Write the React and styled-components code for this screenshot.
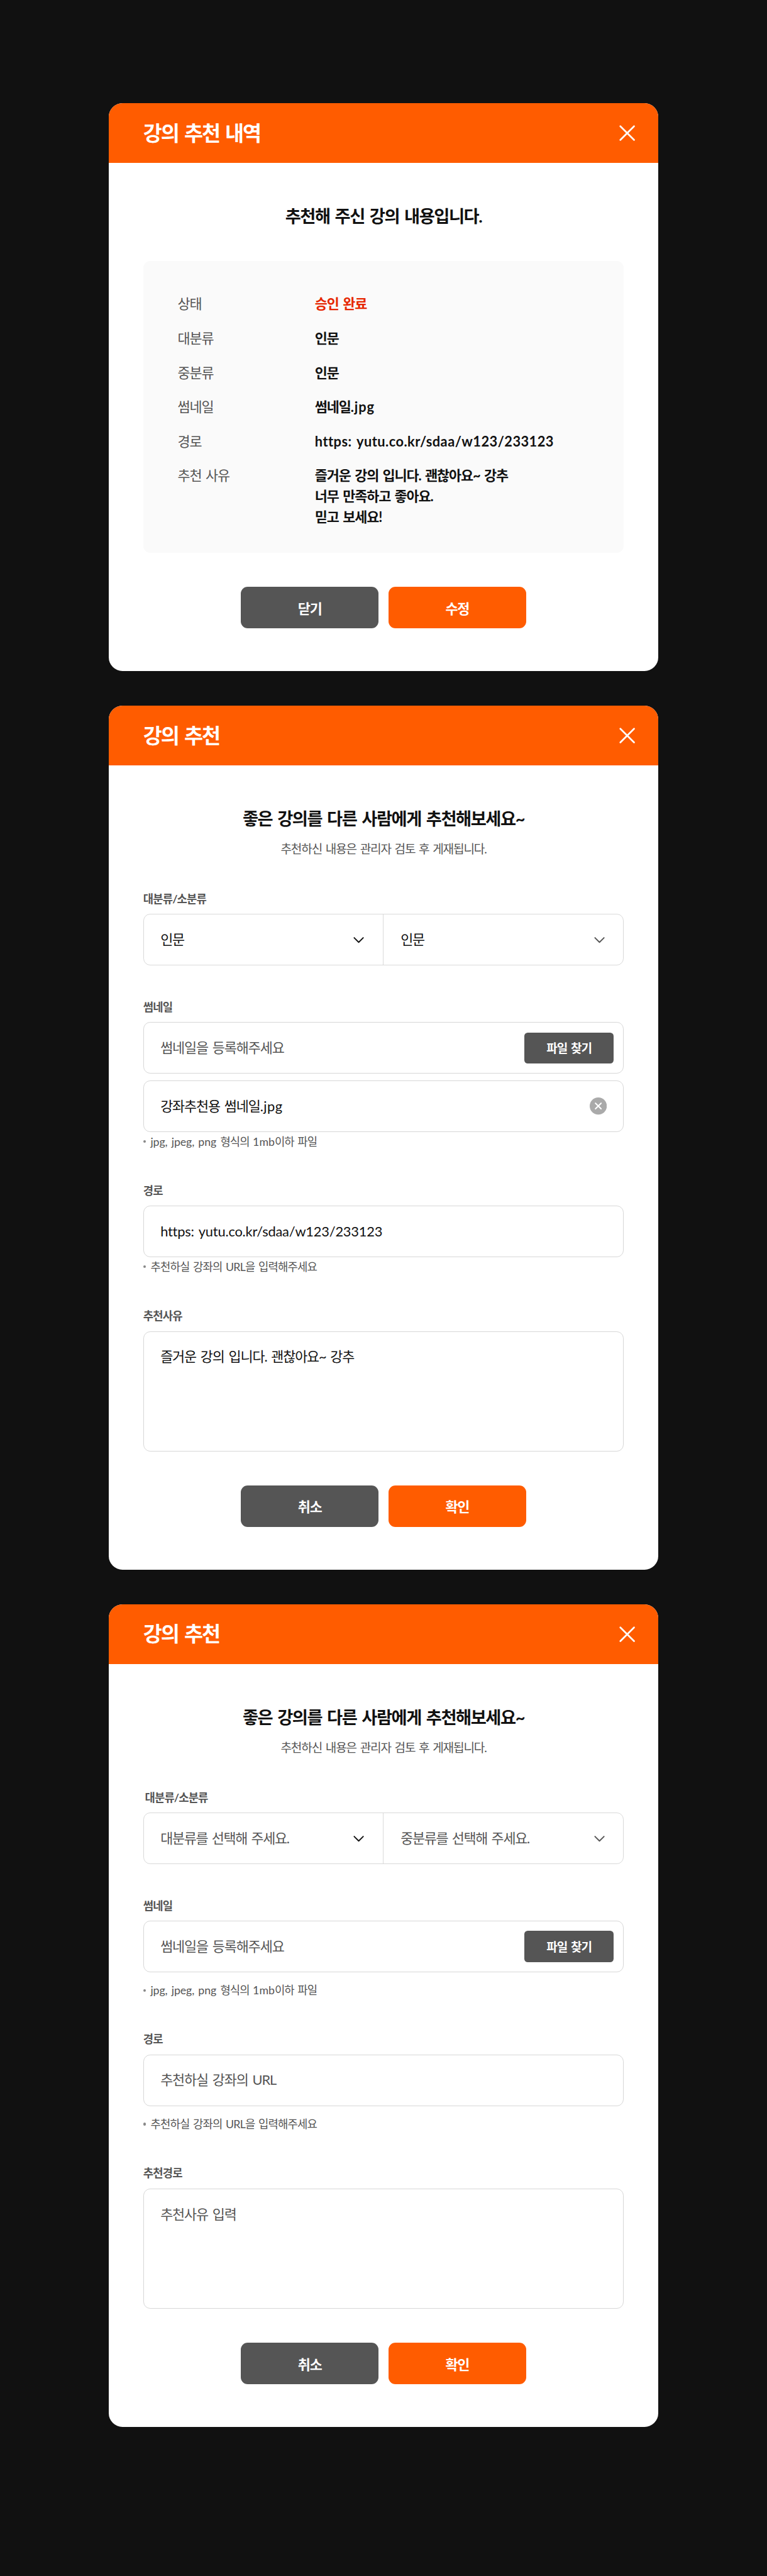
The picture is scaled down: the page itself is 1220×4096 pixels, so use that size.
import React from "react";
import styled, { createGlobalStyle } from "styled-components";

// Design units are converted to screen pixels with one common ratio.
const u = (n) => `${+(n * 0.68238).toFixed(3)}px`;

const GlobalStyle = createGlobalStyle`
  * {
    box-sizing: border-box;
    letter-spacing: -0.05em;
    word-spacing: 0.1em;
  }
  body {
    margin: 0;
    background: #111;
    font-family: Lato, "Noto Sans CJK KR", sans-serif;
  }
  h1, h2, p, dl, dt, dd { margin: 0; }
  button { font-family: inherit; border: 0; padding: 0; cursor: pointer; }
`;

const Page = styled.main`
  display: flex;
  flex-direction: column;
  align-items: center;
  gap: ${u(80)};
  padding: ${u(240)} 0 ${u(346)};
  background: #111;
`;

const Modal = styled.section`
  width: ${u(1280)};
  border-radius: ${u(32)};
  overflow: hidden;
  background: #fff;
`;

const Header = styled.header`
  display: flex;
  align-items: center;
  justify-content: space-between;
  height: ${u(140)};
  padding: 0 ${u(52)} 0 ${u(80)};
  background: #ff5c00;
  color: #fff;
`;

const Title = styled.h1`
  font-size: ${u(48)};
  line-height: ${u(64)};
  font-weight: 700;
  letter-spacing: -0.065em;
`;

const IconButton = styled.button`
  display: flex;
  background: none;
`;

const Body = styled.div`
  display: flex;
  flex-direction: column;
  padding: ${u(96)} ${u(80)} ${u(100)};
`;

const Heading = styled.h2`
  font-size: ${u(40)};
  line-height: ${u(56)};
  font-weight: 700;
  letter-spacing: -0.053em;
  color: #111;
  text-align: center;
`;

const SubHeading = styled.p`
  margin-top: ${u(22)};
  font-size: ${u(28)};
  line-height: ${u(40)};
  letter-spacing: -0.06em;
  color: #555;
  text-align: center;
`;

const Summary = styled.dl`
  display: grid;
  grid-template-columns: ${u(320)} 1fr;
  row-gap: ${u(32)};
  height: ${u(680)};
  align-content: start;
  margin-top: ${u(76)};
  padding: ${u(77)} ${u(80)} 0;
  border-radius: ${u(16)};
  background: #fafafa;
  font-size: ${u(32)};
  line-height: ${u(48)};
`;

const Term = styled.dt`
  color: #555;
`;

const Detail = styled.dd`
  font-weight: 700;
  color: ${(p) => (p.$accent ? "#e62600" : "#111")};
  white-space: pre-line;
`;

const Latin = styled.span`
  letter-spacing: ${(p) => p.$tracking || 0}em;
`;

const Field = styled.div`
  display: flex;
  flex-direction: column;
  margin-top: ${u(76)};
`;

const Label = styled.p`
  padding: ${u(1)} 0 ${u(15)} ${(p) => (p.$indent ? u(4) : 0)};
  font-size: ${u(26)};
  line-height: ${u(40)};
  font-weight: 700;
  color: #555;
`;

const Box = styled.div`
  display: flex;
  align-items: center;
  justify-content: space-between;
  height: ${u(120)};
  padding: 0 ${(p) => u(p.$right || 38)} 0 ${u(38.5)};
  border: 1px solid #d7d7d7;
  border-radius: ${u(16)};
  font-size: ${u(32)};
  line-height: ${u(48)};
  color: ${(p) => (p.$filled ? "#111" : "#555")};

  & + & { margin-top: ${u(16)}; }
`;

const TextArea = styled(Box)`
  align-items: flex-start;
  height: ${u(280)};
  padding-top: ${u(35)};
`;

const SelectGroup = styled.div`
  display: grid;
  grid-template-columns: 1fr 1fr;
  height: ${u(120)};
  border: 1px solid #d9d9d9;
  border-radius: ${u(16)};
`;

const Select = styled.div`
  display: flex;
  align-items: center;
  justify-content: space-between;
  padding: 0 ${u(42)} 0 ${u(38.5)};
  font-size: ${u(32)};
  line-height: ${u(48)};
  color: ${(p) => (p.$filled ? "#111" : "#555")};

  &:first-child { border-right: 1px solid #d9d9d9; }
  &:last-child { padding-right: ${u(40.5)}; padding-left: ${u(40)}; }
`;

const SelectText = styled.span`
  letter-spacing: -0.06em;
`;

const FileButton = styled.button`
  width: ${u(208)};
  height: ${u(72)};
  border-radius: ${u(8)};
  background: #555;
  color: #fff;
  font-size: ${u(28)};
  font-weight: 700;
`;

const Note = styled.p`
  display: flex;
  align-items: center;
  gap: ${u(11)};
  margin-top: ${(p) => u(p.$gap)};
  font-size: ${u(26)};
  line-height: ${u(36)};
  letter-spacing: -0.045em;
  color: #555;

  &::before {
    content: "";
    width: ${u(6)};
    height: ${u(6)};
    border-radius: 50%;
    background: #888;
  }
`;

const Actions = styled.footer`
  display: flex;
  justify-content: center;
  gap: ${u(24)};
  margin-top: ${u(80)};
`;

const ActionButton = styled.button`
  width: ${u(320)};
  height: ${u(96)};
  border-radius: ${u(16)};
  background: ${(p) => (p.$primary ? "#ff5c00" : "#555")};
  color: #fff;
  font-size: ${u(32)};
  font-weight: 700;
`;

const Icon = styled.svg.attrs({ fill: "none", strokeLinecap: "round", strokeLinejoin: "round" })`
  display: block;
  flex: none;
  width: ${(p) => u(p.$w)};
  height: ${(p) => u(p.$h)};
`;

const CloseIcon = () => (
  <Icon $w={40} $h={40} viewBox="0 0 40 40">
    <path d="M4 4 36 36M36 4 4 36" stroke="#fff" strokeWidth="4" />
  </Icon>
);

const Chevron = ({ color }) => (
  <Icon $w={28} $h={18} viewBox="0 0 28 18">
    <path d="M3.5 4.5 14 15 24.5 4.5" stroke={color} strokeWidth="2.8" />
  </Icon>
);

const ClearIcon = () => (
  <Icon $w={40} $h={40} viewBox="0 0 40 40">
    <circle cx="20" cy="20" r="20" fill="#aaa" />
    <path d="M13.5 13.5 26.5 26.5M26.5 13.5 13.5 26.5" stroke="#fff" strokeWidth="3" />
  </Icon>
);

function Dialog({ title, heading, sub, cancel, confirm, children }) {
  return (
    <Modal>
      <Header>
        <Title>{title}</Title>
        <IconButton><CloseIcon /></IconButton>
      </Header>
      <Body>
        <Heading>{heading}</Heading>
        {sub && <SubHeading>{sub}</SubHeading>}
        {children}
        <Actions>
          <ActionButton>{cancel}</ActionButton>
          <ActionButton $primary>{confirm}</ActionButton>
        </Actions>
      </Body>
    </Modal>
  );
}

function RecommendForm({ major, minor, file, url, urlPlaceholder, reasonLabel, reason, reasonPlaceholder, noteGap, indent }) {
  return (
    <Dialog
      title="강의 추천"
      heading="좋은 강의를 다른 사람에게 추천해보세요~"
      sub="추천하신 내용은 관리자 검토 후 게재됩니다."
      cancel="취소"
      confirm="확인"
    >
      <Field>
        <Label $indent={indent}>대분류/소분류</Label>
        <SelectGroup>
          <Select $filled={!!major}>
            <SelectText>{major || "대분류를 선택해 주세요."}</SelectText>
            <Chevron color="#111" />
          </Select>
          <Select $filled={!!minor}>
            <SelectText>{minor || "중분류를 선택해 주세요."}</SelectText>
            <Chevron color="#555" />
          </Select>
        </SelectGroup>
      </Field>
      <Field>
        <Label>썸네일</Label>
        <Box $right={22}>썸네일을 등록해주세요<FileButton>파일 찾기</FileButton></Box>
        {file && <Box $filled><span>{file}<Latin $tracking={0.02}>.jpg</Latin></span><ClearIcon /></Box>}
        <Note $gap={noteGap}>
          <span>
            <Latin $tracking={-0.005}>jpg, jpeg, png </Latin>형식의 <Latin>1mb</Latin>이하 파일
          </span>
        </Note>
      </Field>
      <Field>
        <Label>경로</Label>
        <Box $filled={!!url}>{url ? <Latin $tracking={-0.009}>{url}</Latin> : urlPlaceholder}</Box>
        <Note $gap={noteGap}>추천하실 강좌의 URL을 입력해주세요</Note>
      </Field>
      <Field>
        <Label>{reasonLabel}</Label>
        <TextArea $filled={!!reason}>{reason || reasonPlaceholder}</TextArea>
      </Field>
    </Dialog>
  );
}

const URL_TEXT = "https: yutu.co.kr/sdaa/w123/233123";

export default function App() {
  return (
    <>
      <GlobalStyle />
      <Page>
        <Dialog title="강의 추천 내역" heading="추천해 주신 강의 내용입니다." cancel="닫기" confirm="수정">
          <Summary>
            <Term>상태</Term><Detail $accent>승인 완료</Detail>
            <Term>대분류</Term><Detail>인문</Detail>
            <Term>중분류</Term><Detail>인문</Detail>
            <Term>썸네일</Term><Detail>썸네일<Latin $tracking={0.04}>.jpg</Latin></Detail>
            <Term>경로</Term><Detail><Latin $tracking={0.021}>{URL_TEXT}</Latin></Detail>
            <Term>추천 사유</Term>
            <Detail>{"즐거운 강의 입니다. 괜찮아요~ 강추\n너무 만족하고 좋아요.\n믿고 보세요!"}</Detail>
          </Summary>
        </Dialog>
        <RecommendForm
          major="인문"
          minor="인문"
          file="강좌추천용 썸네일"
          url={URL_TEXT}
          reasonLabel="추천사유"
          reason="즐거운 강의 입니다. 괜찮아요~ 강추"
          noteGap={4}
        />
        <RecommendForm
          urlPlaceholder="추천하실 강좌의 URL"
          reasonLabel="추천경로"
          reasonPlaceholder="추천사유 입력"
          noteGap={24}
          indent
        />
      </Page>
    </>
  );
}
